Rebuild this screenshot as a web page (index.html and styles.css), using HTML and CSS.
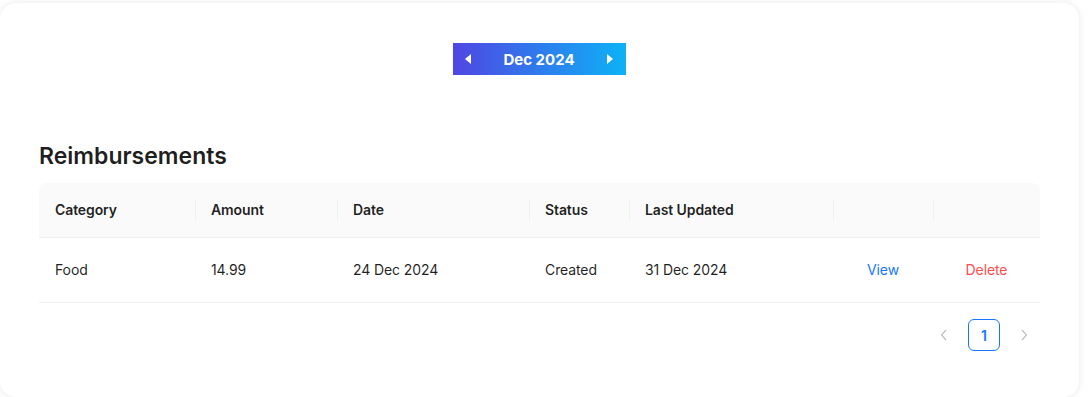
FILE: index.html
```html
<!DOCTYPE html>
<html lang="en">
<head>
    <meta charset="UTF-8">
    <meta name="viewport" content="width=device-width, initial-scale=1.0">
    <title>Reimbursements</title>
    <link rel="stylesheet" href="styles.css">
</head>
<body>
    <div class="card">
        <div class="month-bar">
            <div class="month-picker">
                <span class="arrow">
                    <svg width="8" height="10" viewBox="0 0 8 10"><path d="M6 0 L6 10 L0 5 Z" fill="#fff"/></svg>
                </span>
                <span class="month-label">Dec 2024</span>
                <span class="arrow">
                    <svg width="8" height="10" viewBox="0 0 8 10"><path d="M2 0 L2 10 L8 5 Z" fill="#fff"/></svg>
                </span>
            </div>
        </div>

        <h2 class="title">Reimbursements</h2>

        <table class="table">
            <thead>
                <tr>
                    <th class="col-cat">Category</th>
                    <th class="col-amt">Amount</th>
                    <th class="col-date">Date</th>
                    <th class="col-status">Status</th>
                    <th class="col-upd">Last Updated</th>
                    <th class="col-view"></th>
                    <th class="col-del"></th>
                </tr>
            </thead>
            <tbody>
                <tr>
                    <td>Food</td>
                    <td>14.99</td>
                    <td>24 Dec 2024</td>
                    <td>Created</td>
                    <td>31 Dec 2024</td>
                    <td class="center"><a href="#" class="link view">View</a></td>
                    <td class="center"><a href="#" class="link delete">Delete</a></td>
                </tr>
            </tbody>
        </table>

        <div class="pagination">
            <span class="page-item disabled">
                <svg width="10" height="12" viewBox="0 0 10 12"><path d="M7 1 L2.5 6 L7 11" fill="none" stroke="currentColor" stroke-width="1.2"/></svg>
            </span>
            <span class="page-item active">1</span>
            <span class="page-item disabled">
                <svg width="10" height="12" viewBox="0 0 10 12"><path d="M3 1 L7.5 6 L3 11" fill="none" stroke="currentColor" stroke-width="1.2"/></svg>
            </span>
        </div>
    </div>
</body>
</html>
```

FILE: styles.css
```css
body {
    margin: 0;
    background-color: #fff;
    font-family: Inter, "Noto Sans", sans-serif;
    color: rgba(0, 0, 0, 0.88);
    overflow: hidden;
}
.card {
    margin-top: 3px;
    width: 1079px;
    height: 394px;
    box-sizing: border-box;
    padding: 40px 39px 0 39px;
    background-color: #fff;
    border-radius: 16px;
    box-shadow: 0 0 8px rgba(0, 0, 0, 0.09);
}
.month-bar {
    display: flex;
    justify-content: center;
}
.month-picker {
    display: flex;
    align-items: center;
    justify-content: space-between;
    width: 173px;
    height: 32px;
    box-sizing: border-box;
    padding: 0 13px 0 12px;
    background: linear-gradient(90deg, #5046e3, #0db2f6);
    color: #fff;
}
.arrow {
    display: flex;
    align-items: center;
}
.month-label {
    font-size: 15px;
    font-weight: 700;
}
.title {
    margin: 66px 0 12px 0;
    font-size: 23px;
    line-height: 30px;
    font-weight: 600;
}
.table {
    width: 100%;
    border-collapse: separate;
    border-spacing: 0;
    table-layout: fixed;
    font-size: 14px;
    letter-spacing: -0.1px;
}
.table th {
    position: relative;
    background-color: #fafafa;
    text-align: left;
    font-weight: 600;
    padding: 16px;
    line-height: 22px;
    border-bottom: 1px solid #f0f0f0;
}
.table th + th::before {
    content: "";
    position: absolute;
    left: 0;
    top: 50%;
    width: 1px;
    height: 22px;
    transform: translateY(-50%);
    background-color: #f0f0f0;
}
.table th:first-child { border-top-left-radius: 8px; }
.table th:last-child { border-top-right-radius: 8px; }
.table td {
    padding: 16px;
    line-height: 32px;
    border-bottom: 1px solid #f0f0f0;
}
.col-cat { width: 124px; }
.col-amt { width: 110px; }
.col-date { width: 160px; }
.col-status { width: 68px; }
.col-upd { width: 172px; }
.col-view { width: 68px; }
.center { text-align: center; }
.link {
    text-decoration: none;
}
.view { color: #1677ff; }
.delete { color: #ff4d4f; }
.pagination {
    display: flex;
    justify-content: flex-end;
    gap: 8px;
    margin-top: 16px;
}
.page-item {
    width: 32px;
    height: 32px;
    box-sizing: border-box;
    display: flex;
    align-items: center;
    justify-content: center;
    border-radius: 6px;
    font-size: 14px;
}
.disabled { color: rgba(0, 0, 0, 0.25); }
.active {
    border: 1px solid #1677ff;
    color: #1677ff;
    font-weight: 600;
}
```
